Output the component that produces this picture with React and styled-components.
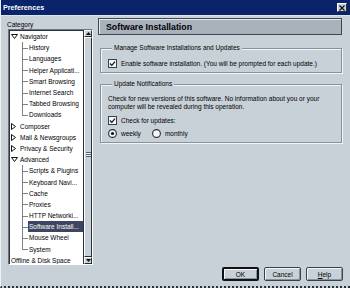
import React from "react";
import styled, { createGlobalStyle } from "styled-components";

const BG = "#c8d0d8";
const FONT = `"Liberation Sans", Arial, sans-serif`;

const Global = createGlobalStyle`
  html, body { margin: 0; padding: 0; background: ${BG}; overflow: hidden; }
  * { box-sizing: border-box; }
`;

const Window = styled.div`
  width: 350px;
  height: 288px;
  background: ${BG};
  border-left: 1px solid #eef1f4;
  border-bottom: 2px dotted #2c3038;
  display: flex;
  flex-direction: column;
  font-family: ${FONT};
  font-size: 6.5px;
  color: #000;
`;

const TitleBar = styled.div`
  height: 16px;
  flex: none;
  background: #0a246b;
  border-bottom: 1px solid #dde3e9;
  display: flex;
  align-items: center;
  justify-content: space-between;
  padding: 0 3px 0 2px;
`;

const TitleText = styled.span`
  color: #fff;
  font-weight: bold;
  font-size: 7.2px;
`;

const CloseButton = styled.span`
  width: 10px;
  height: 9px;
  background: ${BG};
  border: 1px solid;
  border-color: #fff #2a2e36 #2a2e36 #fff;
  display: flex;
  align-items: center;
  justify-content: center;
`;

const Main = styled.div`
  flex: 1;
  display: flex;
  gap: 5px;
  padding: 2px 7px 5px 6px;
  min-height: 0;
`;

const Sidebar = styled.div`
  width: 86px;
  flex: none;
  display: flex;
  flex-direction: column;
`;

const SideLabel = styled.div`
  height: 11px;
  line-height: 11px;
  padding-top: 1px;
`;

const TreeBox = styled.div`
  margin-left: 1px;
  height: 236px;
  display: flex;
  background: #fff;
  border: 1px solid;
  border-color: #6c747e #ffffff #ffffff #6c747e;
  box-shadow: inset 1px 1px 0 #2e323a;
  overflow: hidden;
`;

const TreeList = styled.div`
  flex: 1;
  min-width: 0;
  padding-top: 1px;
  overflow: hidden;
`;

const Row = styled.div`
  height: 11.2px;
  display: flex;
  align-items: stretch;
  white-space: nowrap;
  padding-left: ${(p) => (p.$level === 0 ? "2px" : p.$level === 1 ? "13px" : "1px")};
`;

const Toggle = styled.span`
  width: 8px;
  flex: none;
  display: flex;
  align-items: center;
`;

const Branch = styled.span`
  position: relative;
  width: 6px;
  flex: none;
  &::before {
    content: "";
    position: absolute;
    left: 0;
    top: 0;
    bottom: ${(p) => (p.$last ? "50%" : "0")};
    border-left: 1px solid #7a828c;
  }
  &::after {
    content: "";
    position: absolute;
    left: 0;
    right: 0;
    top: 50%;
    border-top: 1px solid #7a828c;
  }
`;

const Label = styled.span`
  display: flex;
  align-items: center;
  flex: ${(p) => (p.$selected ? 1 : "none")};
  padding-left: 1px;
  background: ${(p) => (p.$selected ? "#3c4660" : "transparent")};
  color: ${(p) => (p.$selected ? "#fff" : "#000")};
`;

const ScrollBar = styled.div`
  width: 9px;
  flex: none;
  display: flex;
  flex-direction: column;
  background: ${BG};
  border-left: 1px solid #2e323a;
`;

const ScrollBtn = styled.div`
  height: 7px;
  flex: none;
  background: ${BG};
  border: 1px solid;
  border-color: #fff #2a2e36 #2a2e36 #fff;
  display: flex;
  align-items: center;
  justify-content: center;
`;

const Thumb = styled.div`
  flex: 1;
  background: ${BG};
  border: 1px solid;
  border-color: #fff #2a2e36 #2a2e36 #fff;
  display: flex;
  align-items: center;
  justify-content: center;
  padding-top: 14px;
`;

const Grip = styled.div`
  width: 5px;
  height: 5px;
  background: repeating-linear-gradient(
    to bottom,
    #5a626c 0,
    #5a626c 1px,
    #eef1f4 1px,
    #eef1f4 2px
  );
`;

const Content = styled.div`
  flex: 1;
  display: flex;
  flex-direction: column;
  min-width: 0;
`;

const PanelHeader = styled.div`
  height: 17px;
  margin-right: 1px;
  flex: none;
  background: #a9b1bd;
  border: 1px solid #3e4652;
  box-shadow: inset 1px 1px 0 #e4e9ee;
  display: flex;
  align-items: center;
  padding-left: 7px;
  font-weight: bold;
  font-size: 8.8px;
`;

const Group = styled.fieldset`
  margin: ${(p) => p.$top}px 1px 0 2px;
  padding: ${(p) => p.$pt}px 7px 4px 7px;
  border: 1px solid #88909a;
  box-shadow: inset 1px 1px 0 #f2f5f8, 1px 1px 0 #f2f5f8;
  min-width: 0;
`;

const Legend = styled.legend`
  padding: 0 2px;
  margin-left: 4px;
  line-height: 8px;
  height: 8px;
  background: ${BG};
`;

const Para = styled.p`
  margin: 0;
  line-height: 8px;
`;

const OptionRow = styled.div`
  display: flex;
  align-items: center;
  gap: ${(p) => p.$gap || 5}px;
  height: 9px;
  margin-top: ${(p) => p.$mt || 0}px;
`;

const Option = styled.label`
  display: flex;
  align-items: center;
  gap: 4px;
`;

const Box = styled.span`
  width: 9px;
  height: 9px;
  flex: none;
  display: flex;
`;

const ButtonRow = styled.div`
  margin-top: auto;
  display: flex;
  justify-content: flex-end;
  gap: 5px;
`;

const Button = styled.button`
  width: 37px;
  height: 14px;
  padding: 0;
  font-family: ${FONT};
  font-size: 6.5px;
  color: #000;
  background: ${BG};
  border: ${(p) => (p.$default ? "2px solid #101216" : "1px solid #3a4048")};
  border-radius: 2px;
  box-shadow: inset 1px 1px 0 #f4f6f8, inset -1px -1px 0 #8a929c;
  display: flex;
  align-items: center;
  justify-content: center;
  u { text-decoration: underline; }
`;

const Check = ({ checked }) => (
  <Box>
    <svg width="9" height="9" viewBox="0 0 9 9">
      <rect x="0.5" y="0.5" width="8" height="8" fill="#f4f6f8" stroke="#3a4048" />
      {checked && (
        <path d="M2 4.5 L3.8 6.3 L7 2.6" fill="none" stroke="#111" strokeWidth="1.2" />
      )}
    </svg>
  </Box>
);

const Radio = ({ checked }) => (
  <Box>
    <svg width="9" height="9" viewBox="0 0 9 9">
      <circle cx="4.5" cy="4.5" r="3.9" fill="#f4f6f8" stroke="#2a2e36" strokeWidth="1.1" />
      {checked && <circle cx="4.5" cy="4.5" r="1.6" fill="#111" />}
    </svg>
  </Box>
);

const TriDown = () => (
  <svg width="7" height="5" viewBox="0 0 7 5">
    <path d="M0.5 0.5 H6.5 L3.5 4.5 Z" fill="none" stroke="#111" strokeWidth="1" />
  </svg>
);

const TriRight = () => (
  <svg width="5" height="7" viewBox="0 0 5 7">
    <path d="M0.5 0.5 V6.5 L4.5 3.5 Z" fill="none" stroke="#111" strokeWidth="1" />
  </svg>
);

const items = [
  { t: "Navigator", l: 0, open: true },
  { t: "History", l: 1 },
  { t: "Languages", l: 1 },
  { t: "Helper Applicati...", l: 1 },
  { t: "Smart Browsing", l: 1 },
  { t: "Internet Search", l: 1 },
  { t: "Tabbed Browsing", l: 1 },
  { t: "Downloads", l: 1, last: true },
  { t: "Composer", l: 0 },
  { t: "Mail & Newsgroups", l: 0 },
  { t: "Privacy & Security", l: 0 },
  { t: "Advanced", l: 0, open: true },
  { t: "Scripts & Plugins", l: 1 },
  { t: "Keyboard Navi...", l: 1 },
  { t: "Cache", l: 1 },
  { t: "Proxies", l: 1 },
  { t: "HTTP Networki...", l: 1 },
  { t: "Software Install...", l: 1, sel: true },
  { t: "Mouse Wheel", l: 1 },
  { t: "System", l: 1, last: true },
  { t: "Offline & Disk Space", l: 2 },
];

export default function App() {
  return (
    <>
      <Global />
      <Window>
        <TitleBar>
          <TitleText>Preferences</TitleText>
          <CloseButton>
            <svg width="6" height="6" viewBox="0 0 6 6">
              <path d="M0.5 0.5 L5.5 5.5 M5.5 0.5 L0.5 5.5" stroke="#111" strokeWidth="1.2" />
            </svg>
          </CloseButton>
        </TitleBar>
        <Main>
          <Sidebar>
            <SideLabel>Category</SideLabel>
            <TreeBox>
              <TreeList>
                {items.map((it) => (
                  <Row key={it.t} $level={it.l}>
                    {it.l === 0 && <Toggle>{it.open ? <TriDown /> : <TriRight />}</Toggle>}
                    {it.l === 1 && <Branch $last={it.last} />}
                    <Label $selected={it.sel}>{it.t}</Label>
                  </Row>
                ))}
              </TreeList>
              <ScrollBar>
                <ScrollBtn>
                  <svg width="5" height="3" viewBox="0 0 5 3">
                    <path d="M2.5 0 L5 3 H0 Z" fill="#111" />
                  </svg>
                </ScrollBtn>
                <Thumb>
                  <Grip />
                </Thumb>
                <ScrollBtn>
                  <svg width="5" height="3" viewBox="0 0 5 3">
                    <path d="M0 0 H5 L2.5 3 Z" fill="#111" />
                  </svg>
                </ScrollBtn>
              </ScrollBar>
            </TreeBox>
          </Sidebar>
          <Content>
            <PanelHeader>Software Installation</PanelHeader>
            <Group $top={9} $pt={7}>
              <Legend>Manage Software Installations and Updates</Legend>
              <OptionRow>
                <Option>
                  <Check checked />
                  Enable software installation. (You will be prompted for each update.)
                </Option>
              </OptionRow>
            </Group>
            <Group $top={7} $pt={7}>
              <Legend>Update Notifications</Legend>
              <Para>
                Check for new versions of this software. No information about you or your
                <br />
                computer will be revealed during this operation.
              </Para>
              <OptionRow $mt={5}>
                <Option>
                  <Check checked />
                  Check for updates:
                </Option>
              </OptionRow>
              <OptionRow $mt={4} $gap={11}>
                <Option>
                  <Radio checked />
                  weekly
                </Option>
                <Option>
                  <Radio />
                  monthly
                </Option>
              </OptionRow>
            </Group>
            <ButtonRow>
              <Button $default>OK</Button>
              <Button>Cancel</Button>
              <Button>
                <span>
                  <u>H</u>elp
                </span>
              </Button>
            </ButtonRow>
          </Content>
        </Main>
      </Window>
    </>
  );
}
